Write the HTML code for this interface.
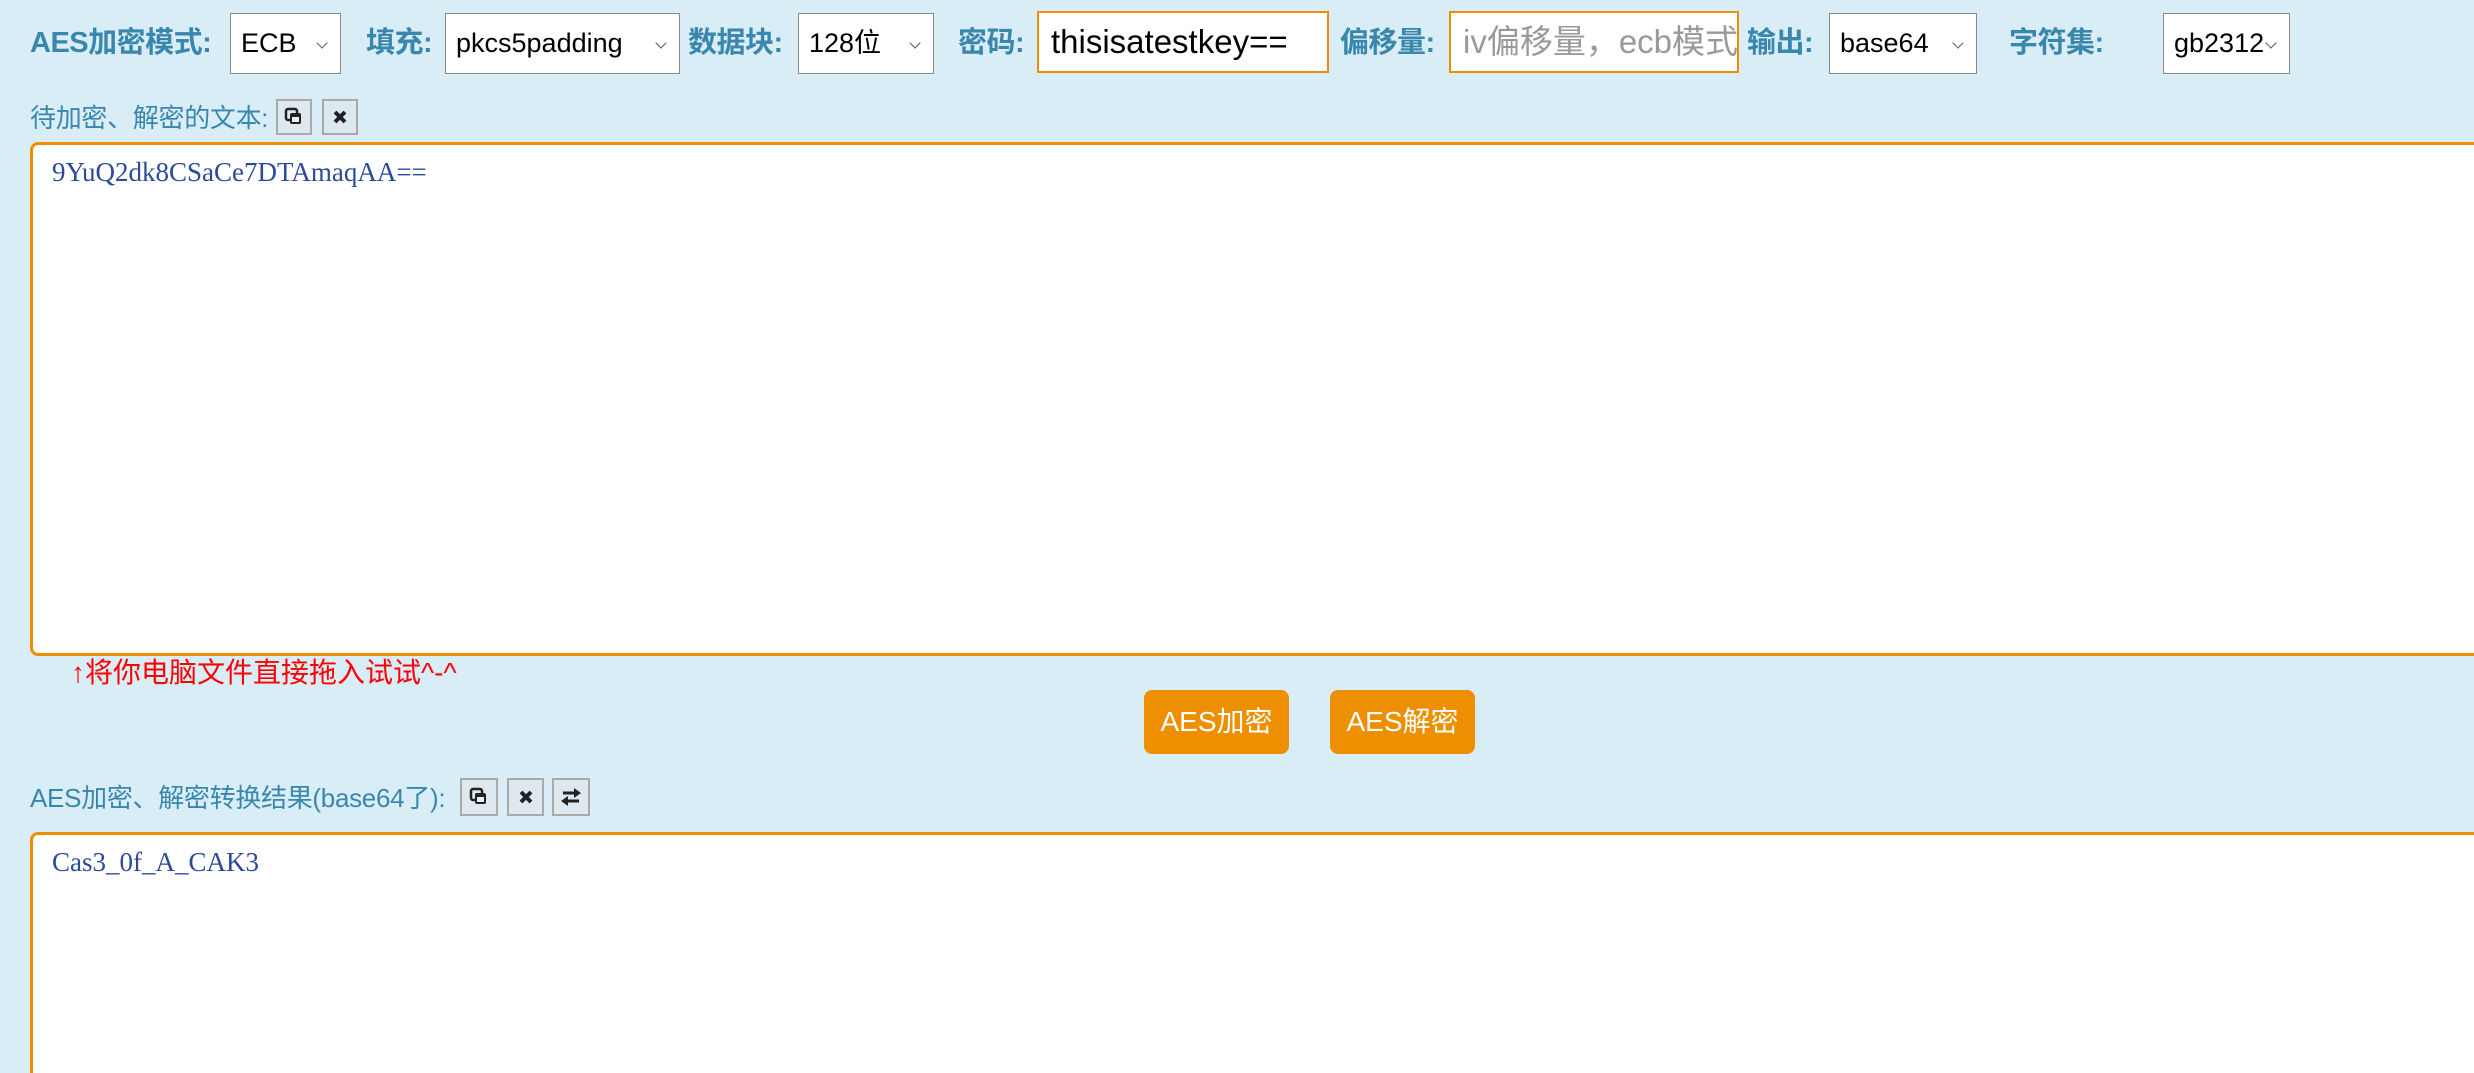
<!DOCTYPE html>
<html><head><meta charset="utf-8"><style>
html,body{margin:0;width:2474px;height:1073px;overflow:hidden}
body{background:#d9edf7;font-family:"Liberation Sans","Noto Sans CJK SC",sans-serif;position:relative}
.a{position:absolute}
.lb{position:absolute;color:#3a87ad;font-weight:bold;font-size:29px;line-height:61px;top:13px;letter-spacing:-0.5px}
.sel{position:absolute;top:13px;background:#fff;border:1px solid #888;font-size:27px;line-height:59px;padding-left:10px;box-sizing:border-box;height:61px;color:#000}
.sel:after{content:"";position:absolute;right:14px;top:25px;width:7px;height:7px;border-right:1.5px solid #555;border-bottom:1.5px solid #555;transform:rotate(45deg)}
.inp{position:absolute;top:11px;height:62px;border:2px solid #eb8f00;background:#fff;box-sizing:border-box;font-size:33px;line-height:58px;padding-left:12px;overflow:hidden;white-space:nowrap}
.sm{position:absolute;color:#3a87ad;font-size:26px;line-height:38px;letter-spacing:-0.3px}
.ic{position:absolute;width:36px;height:36px;border:2px solid #aaa;box-sizing:border-box;background:#dde9ef}
.ta{position:absolute;left:30px;width:2500px;background:#fff;border:3px solid #eb8f00;border-radius:8px;box-sizing:border-box}
.tt{position:absolute;left:52px;font-family:"Liberation Serif",serif;font-size:27px;color:#2a4a9a}
.btn{position:absolute;top:690px;height:64px;width:145px;background:#ed8f00;border-radius:8px;color:#fff;font-size:28px;line-height:64px;text-align:center}
</style></head><body>
<div class="lb" style="left:30px">AES加密模式:</div>
<div class="sel" style="left:230px;width:111px">ECB</div>
<div class="lb" style="left:366px">填充:</div>
<div class="sel" style="left:445px;width:235px">pkcs5padding</div>
<div class="lb" style="left:688px">数据块:</div>
<div class="sel" style="left:798px;width:136px">128位</div>
<div class="lb" style="left:958px">密码:</div>
<div class="inp" style="left:1037px;width:292px">thisisatestkey==</div>
<div class="lb" style="left:1340px">偏移量:</div>
<div class="inp" style="left:1449px;width:290px;color:#999">iv偏移量，ecb模式不用</div>
<div class="lb" style="left:1747px">输出:</div>
<div class="sel" style="left:1829px;width:148px">base64</div>
<div class="lb" style="left:2009px">字符集:</div>
<div class="sel" style="left:2163px;width:127px">gb2312</div>

<div class="sm" style="left:30px;top:99px">待加密、解密的文本:</div>
<div class="ic" style="left:276px;top:99px"><svg width="32" height="32" viewBox="0 0 32 32"><rect x="8" y="8" width="11" height="11" rx="2" fill="none" stroke="#222" stroke-width="2.5"/><rect x="12" y="12" width="11" height="11" rx="2" fill="#222"/><rect x="14" y="16" width="7" height="5" fill="#eee"/></svg></div>
<div class="ic" style="left:322px;top:99px"><svg width="32" height="32" viewBox="0 0 32 32"><path d="M11 11L21 21M21 11L11 21" stroke="#222" stroke-width="4"/></svg></div>
<div class="ta" style="top:142px;height:514px"></div>
<div class="tt" style="top:157px">9YuQ2dk8CSaCe7DTAmaqAA==</div>
<div class="a" style="left:71px;top:651px;color:#f00;font-size:28px">↑将你电脑文件直接拖入试试^-^</div>
<div class="btn" style="left:1144px">AES加密</div>
<div class="btn" style="left:1330px">AES解密</div>
<div class="sm" style="left:30px;top:779px">AES加密、解密转换结果(base64了):</div>
<div class="ic" style="left:460px;top:778px;height:38px;width:38px"><svg width="34" height="34" viewBox="0 0 34 34"><rect x="9" y="9" width="11" height="11" rx="2" fill="none" stroke="#222" stroke-width="2.5"/><rect x="13" y="13" width="11" height="11" rx="2" fill="#222"/><rect x="15" y="17" width="7" height="5" fill="#eee"/></svg></div>
<div class="ic" style="left:507px;top:778px;height:38px;width:37px"><svg width="33" height="34" viewBox="0 0 33 34"><path d="M12 12L22 22M22 12L12 22" stroke="#222" stroke-width="4"/></svg></div>
<div class="ic" style="left:552px;top:778px;height:38px;width:38px"><svg width="34" height="34" viewBox="0 0 34 34"><path d="M9 13H22" stroke="#222" stroke-width="3"/><path d="M20 8L27 13L20 18Z" fill="#222"/><path d="M25 21H12" stroke="#222" stroke-width="3"/><path d="M14 16L7 21L14 26Z" fill="#222"/></svg></div>
<div class="ta" style="top:832px;height:280px"></div>
<div class="tt" style="top:847px">Cas3_0f_A_CAK3</div>
</body></html>
